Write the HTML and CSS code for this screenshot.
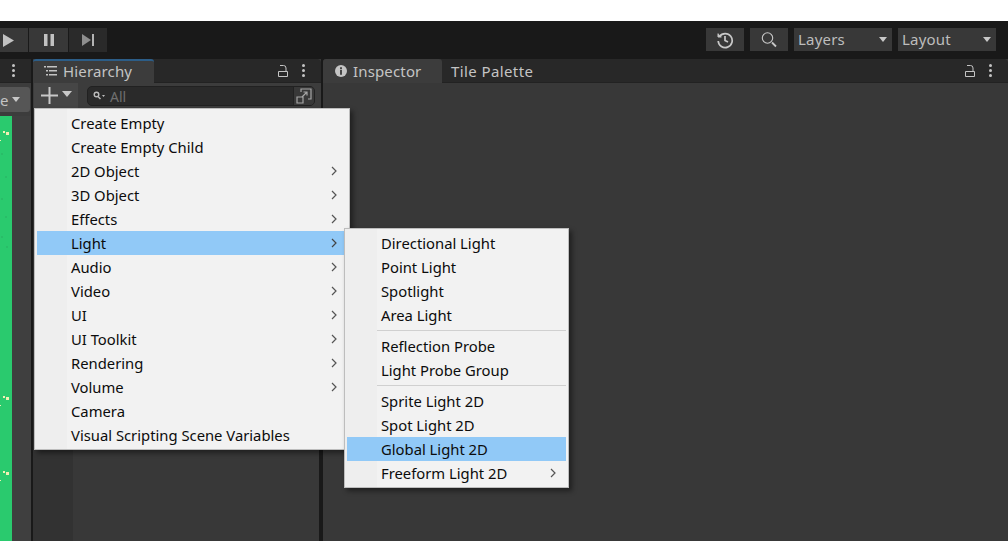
FILE: index.html
```html
<!DOCTYPE html>
<html lang="en">
<head>
<meta charset="utf-8">
<title>Unity Editor</title>
<link rel="stylesheet" href="styles.css">
</head>
<body>
<div class="titlebar"></div>
<header class="toolbar">
  <div class="play-group">
    <button class="tb play"><svg width="11" height="13" viewBox="0 0 11 13"><path d="M0 0L11 6.500L0 13Z" fill="#c2c2c2"/></svg></button>
    <button class="tb pause"><svg width="10" height="12" viewBox="0 0 10 12"><path d="M0 0h3.500v12H0zM6.500 0H10v12H6.500z" fill="#c2c2c2"/></svg></button>
    <button class="tb step"><svg width="12" height="12" viewBox="0 0 12 12"><path d="M0 0L9 6L0 12Z" fill="#8e8e8e"/><path d="M10 0h2v12h-2z" fill="#b4b4b4"/></svg></button>
  </div>
  <div class="spacer"></div>
  <div class="right-group">
    <button class="tb icon-btn"><svg width="18" height="18" viewBox="0 0 18 18" fill="none" stroke="#c8c8c8" stroke-width="1.700"><path d="M3.500 5.500A7 7 0 1 1 2.200 10"/><path d="M2 2.500V6h3.500" fill="#c8c8c8" stroke-width="1"/><path d="M9 5v4.500l3 1.500"/></svg></button>
    <button class="tb icon-btn"><svg width="18" height="18" viewBox="0 0 18 18" fill="none" stroke="#c8c8c8"><circle cx="7.500" cy="7" r="5.200" stroke-width="1.100"/><path d="M12 11.500l4 4" stroke-width="1.800"/></svg></button>
    <button class="tb dropdown">Layers<span class="caret"></span></button>
    <button class="tb dropdown">Layout<span class="caret"></span></button>
  </div>
</header>
<main class="dock">
  <section class="panel left-panel">
    <div class="tabbar"><span class="kebab end"><i></i><i></i><i></i></span></div>
    <div class="subbar"><div class="scene-drop">e<span class="caret"></span></div></div>
    <div class="left-body">
      <svg class="green" width="12" height="425" viewBox="0 0 12 425">
        <rect width="12" height="425" fill="#2aca6e"/>
        <g fill="#29bd68"><rect x="1" y="37" width="2" height="2"/><rect x="5" y="60" width="2" height="2"/><rect x="1" y="82" width="2" height="2"/><rect x="5" y="100" width="2" height="2"/><rect x="1" y="120" width="2" height="2"/><rect x="6" y="130" width="2" height="2"/></g>
        <g fill="#f1efb4"><rect x="6" y="16" width="3" height="3"/><rect x="3" y="15" width="2" height="2"/><rect x="0" y="24" width="1" height="1"/><rect x="6" y="281" width="3" height="3"/><rect x="3" y="280" width="2" height="2"/><rect x="0" y="289" width="1" height="1"/><rect x="6" y="356" width="3" height="3"/><rect x="3" y="355" width="2" height="2"/><rect x="0" y="364" width="1" height="1"/></g>
      </svg>
    </div>
  </section>
  <section class="panel hierarchy">
    <div class="tabbar">
      <div class="tab active-blue">
        <svg class="tab-icon" width="14" height="10" viewBox="0 0 14 10" fill="#c4c4c4"><path d="M0 0h2v1.500H0zM3 0h10v1.500H3zM2 4h2v1.500H2zM5 4h8v1.500H5zM2 8h2v1.500H2zM5 8h8v1.500H5z"/></svg>
        Hierarchy
      </div>
      <div class="spacer"></div>
      <svg class="lock" width="10" height="12" viewBox="0 0 10 12" fill="none" stroke="#c4c4c4"><path d="M.5 6.500h9v5h-9zM8 6.500V3a2.500 2.500 0 0 0-2.500-2.500H2"/></svg>
      <span class="kebab"><i></i><i></i><i></i></span>
    </div>
    <div class="subbar hier-bar">
      <div class="plus-btn"><svg width="17" height="17" viewBox="0 0 17 17"><path d="M7.500 0h2v7.500H17v2H9.500V17h-2V9.500H0v-2h7.500z" fill="#c8c8c8"/></svg><span class="caret"></span></div>
      <div class="searchbox">
        <svg width="12" height="10" viewBox="0 0 12 10" fill="none" stroke="#bbb"><circle cx="3.500" cy="3.500" r="2.300" stroke-width="1.400"/><path d="M5 5.500l2.500 2.500" stroke-width="1.500"/><path d="M9 4h3l-1.500 2z" fill="#bbb" stroke="none"/></svg>
        <span class="placeholder">All</span>
        <span class="spacer"></span>
        <span class="scene-search"><svg width="16" height="16" viewBox="0 0 16 16" fill="none" stroke="#a6a6a6" stroke-width="1.200"><path d="M5 4V1h10v10h-3"/><path d="M1 9h6v6H1z"/><path d="M6 9l5-5M7.500 4H11v3.500"/></svg></span>
      </div>
    </div>
    <div class="hier-body"><div class="gutter"></div><div class="fill"></div></div>
  </section>
  <section class="panel inspector">
    <div class="tabbar">
      <div class="tab wide">
        <svg class="tab-icon" width="12" height="12" viewBox="0 0 13 13"><circle cx="6.500" cy="6.500" r="6.500" fill="#c4c4c4"/><path d="M5.500 2.500h2v2h-2zM5.500 5.500h2v5h-2z" fill="#3c3c3c"/></svg>
        Inspector
      </div>
      <div class="tab plain">Tile Palette</div>
      <div class="spacer"></div>
      <svg class="lock" width="10" height="12" viewBox="0 0 10 12" fill="none" stroke="#c4c4c4"><path d="M.5 6.500h9v5h-9zM8 6.500V3a2.500 2.500 0 0 0-2.500-2.500H2"/></svg>
      <span class="kebab"><i></i><i></i><i></i></span>
    </div>
    <div class="insp-body"></div>
  </section>
</main>

<nav class="menu main-menu">
  <div class="item">Create Empty</div>
  <div class="item">Create Empty Child</div>
  <div class="item sub">2D Object<svg class="chev" width="6" height="10" viewBox="0 0 6 10"><path d="M1 1l4 4-4 4" fill="none" stroke="#555" stroke-width="1.200"/></svg></div>
  <div class="item sub">3D Object<svg class="chev" width="6" height="10" viewBox="0 0 6 10"><path d="M1 1l4 4-4 4" fill="none" stroke="#555" stroke-width="1.200"/></svg></div>
  <div class="item sub">Effects<svg class="chev" width="6" height="10" viewBox="0 0 6 10"><path d="M1 1l4 4-4 4" fill="none" stroke="#555" stroke-width="1.200"/></svg></div>
  <div class="item sub selected">Light<svg class="chev" width="6" height="10" viewBox="0 0 6 10"><path d="M1 1l4 4-4 4" fill="none" stroke="#444" stroke-width="1.200"/></svg></div>
  <div class="item sub">Audio<svg class="chev" width="6" height="10" viewBox="0 0 6 10"><path d="M1 1l4 4-4 4" fill="none" stroke="#555" stroke-width="1.200"/></svg></div>
  <div class="item sub">Video<svg class="chev" width="6" height="10" viewBox="0 0 6 10"><path d="M1 1l4 4-4 4" fill="none" stroke="#555" stroke-width="1.200"/></svg></div>
  <div class="item sub">UI<svg class="chev" width="6" height="10" viewBox="0 0 6 10"><path d="M1 1l4 4-4 4" fill="none" stroke="#555" stroke-width="1.200"/></svg></div>
  <div class="item sub">UI Toolkit<svg class="chev" width="6" height="10" viewBox="0 0 6 10"><path d="M1 1l4 4-4 4" fill="none" stroke="#555" stroke-width="1.200"/></svg></div>
  <div class="item sub">Rendering<svg class="chev" width="6" height="10" viewBox="0 0 6 10"><path d="M1 1l4 4-4 4" fill="none" stroke="#555" stroke-width="1.200"/></svg></div>
  <div class="item sub">Volume<svg class="chev" width="6" height="10" viewBox="0 0 6 10"><path d="M1 1l4 4-4 4" fill="none" stroke="#555" stroke-width="1.200"/></svg></div>
  <div class="item">Camera</div>
  <div class="item">Visual Scripting Scene Variables</div>
</nav>

<nav class="menu sub-menu">
  <div class="item">Directional Light</div>
  <div class="item">Point Light</div>
  <div class="item">Spotlight</div>
  <div class="item">Area Light</div>
  <div class="sep"></div>
  <div class="item">Reflection Probe</div>
  <div class="item">Light Probe Group</div>
  <div class="sep"></div>
  <div class="item">Sprite Light 2D</div>
  <div class="item">Spot Light 2D</div>
  <div class="item selected">Global Light 2D</div>
  <div class="item sub">Freeform Light 2D<svg class="chev" width="6" height="10" viewBox="0 0 6 10"><path d="M1 1l4 4-4 4" fill="none" stroke="#555" stroke-width="1.200"/></svg></div>
</nav>
</body>
</html>
```
FILE: styles.css
```css
* { box-sizing: border-box; }
html, body { margin: 0; padding: 0; height: 100%; overflow: hidden; }
body {
  width: 1008px; height: 541px; background: #191919;
  font-family: "Noto Sans", "Open Sans", sans-serif;
  display: flex; flex-direction: column; position: relative;
}
.titlebar { height: 21px; background: #fff; flex: none; }
.toolbar { height: 38px; flex: none; background: #191919; display: flex; align-items: flex-start; padding: 7px 12px 0 0; }
.spacer { flex: 1; }
.play-group, .right-group { display: flex; }
.play-group { gap: 1px; }
.right-group { gap: 6px; }
.tb { border: 0; padding: 0; margin: 0; height: 24px; background: #3a3a3a; color: #c4c4c4; display: flex; align-items: center; justify-content: center; font: 15px "Noto Sans", sans-serif; }
.play { width: 28px; background: #383838; justify-content: flex-start; padding-left: 3px; }
.pause { width: 39px; background: #383838; }
.step { width: 38px; background: #2a2a2a; }
.icon-btn { width: 38px; height: 23px; background: #383838; }
.dropdown { width: 98px; height: 23px; justify-content: space-between; padding: 0 5px 2px 4px; background: #383838; color: #bdbdbd; letter-spacing: .2px; }
.caret { width: 0; height: 0; border-left: 4.500px solid transparent; border-right: 4.500px solid transparent; border-top: 5px solid #c8c8c8; display: block; flex: none; }
.dropdown .caret { margin-top: 2px; }

.dock { flex: 1; display: flex; min-height: 0; gap: 2px; padding: 0; }
.panel { display: flex; flex-direction: column; background: #383838; min-width: 0; }
.left-panel { width: 31px; }
.hierarchy { width: 288px; }
.inspector { flex: 1; border-top-left-radius: 4px; }
.tabbar { height: 24px; flex: none; background: #282828; display: flex; align-items: center; color: #c4c4c4; font-size: 15px; padding-right: 16px; border-bottom: 1px solid #222; }
.hierarchy .tabbar, .inspector .tabbar { border-top-left-radius: 4px; border-top-right-radius: 4px; }
.tab { height: 24px; display: flex; align-items: center; padding: 1px 12px 0 12px; background: #3c3c3c; letter-spacing: .15px; }
.tab-icon { margin-right: 6px; flex: none; }
.active-blue { width: 121px; border-top: 2px solid #2c5d87; border-top-left-radius: 3px; border-top-right-radius: 3px; padding: 0 0 2px 11px; }
.active-blue .tab-icon { margin-right: 5px; }
.wide { width: 119px; border-top-left-radius: 3px; border-top-right-radius: 3px; }
.plain { background: transparent; padding-left: 9px; letter-spacing: .4px; }
.lock { margin-right: 14px; flex: none; }
.kebab { display: flex; flex-direction: column; gap: 2px; width: 3px; flex: none; }
.kebab i { width: 3px; height: 3px; background: #c4c4c4; border-radius: 50%; display: block; }
.kebab.end { margin-left: auto; }
.subbar { height: 25px; flex: none; background: #3c3c3c; display: flex; }
.left-panel .subbar { height: 33px; background: #3c3c3c; }
.scene-drop { width: 30px; height: 25px; margin-top: 4px; background: #565656; border-radius: 0 3px 3px 0; color: #c4c4c4; font-size: 15px; display: flex; align-items: center; gap: 4px; padding-left: 0; }
.left-body { flex: 1; background: #3f3f3f; min-height: 0; }
.green { display: block; }
.hier-bar { padding-left: 1px; align-items: flex-start; }
.plus-btn { width: 44px; height: 25px; background: #464646; display: flex; align-items: center; padding-left: 7px; gap: 4px; }
.plus-btn .caret { border-left-width: 5px; border-right-width: 5px; border-top-width: 6px; margin-bottom: 3px; }
.searchbox { margin: 3px 0 0 9px; width: 228px; height: 20px; background: #2a2a2a; border: 1px solid #212121; border-radius: 5px; display: flex; align-items: center; padding-left: 5px; gap: 5px; overflow: hidden; }
.placeholder { color: #6f6f6f; font-size: 14px; }
.scene-search { width: 21px; height: 18px; background: #383838; border-left: 1px solid #222; display: flex; align-items: center; justify-content: center; }
.hier-body { flex: 1; display: flex; min-height: 0; border-right: 2px solid #191919; }
.gutter { width: 40px; background: #323232; }
.fill { flex: 1; background: #383838; }
.insp-body { flex: 1; background: #383838; }

.menu { position: absolute; background: #f2f2f2; border: 1px solid #bdbdbd; padding: 2px; color: #0c0c0c; font-size: 14.800px; box-shadow: 3px 3px 5px rgba(0,0,0,.45); }
.main-menu { left: 34px; top: 108px; width: 316px; height: 342px; background: linear-gradient(90deg, #eeeeee 32px, #f2f2f2 32px); }
.sub-menu { left: 344px; top: 228px; width: 225px; height: 260px; background: linear-gradient(90deg, #eeeeee 32px, #f2f2f2 32px); }
.item { height: 24px; display: flex; align-items: center; padding-left: 34px; position: relative; white-space: nowrap; }
.selected { background: #91c9f7; }
.chev { position: absolute; right: 10px; top: 7px; }
.sep { height: 7px; margin-left: 30px; position: relative; }
.sep::before { content: ""; display: block; position: absolute; left: 0; right: 0; top: 3px; height: 1px; background: #d0d0d0; }
```
